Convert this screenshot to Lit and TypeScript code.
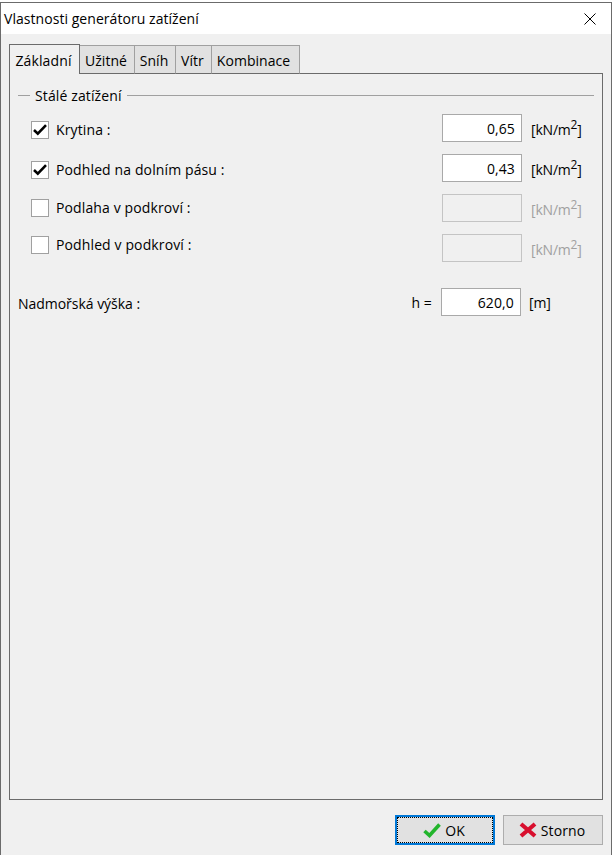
import { LitElement, html, css } from "lit";
import { customElement } from "lit/decorators.js";

const rows = [
  { label: "Krytina :", checked: true, value: "0,65", lead: "low" },
  { label: "Podhled na dolním pásu :", checked: true, value: "0,43", lead: "low" },
  { label: "Podlaha v podkroví :", checked: false, value: "", lead: "" },
  { label: "Podhled v podkroví :", checked: false, value: "", lead: "high" },
];

const tabs = ["Základní", "Užitné", "Sníh", "Vítr", "Kombinace"];

@customElement("app-root")
export class AppRoot extends LitElement {
  static styles = css`
    :host {
      display: block;
      width: 613px;
      height: 855px;
      background: #fff;
      font-family: "Open Sans", "Noto Sans", sans-serif;
      font-size: 14px;
      letter-spacing: 0.12px;
      color: #000;
      overflow: hidden;
    }
    .window {
      box-sizing: border-box;
      width: 612px;
      height: 853px;
      margin-top: 2px;
      border: 1px solid #6b6b6b;
      border-bottom: 0;
      display: flex;
      flex-direction: column;
      background: #f0f0f0;
    }
    .title {
      height: 31px;
      flex: none;
      background: #fff;
      display: flex;
      align-items: center;
      justify-content: space-between;
      padding: 0 15px 0 3px;
      letter-spacing: 0.05px;
    }
    .body {
      flex: 1;
      display: flex;
      flex-direction: column;
      padding: 10px 8px 0 8px;
      min-height: 0;
    }
    .tabs {
      display: flex;
      align-items: flex-end;
      height: 30px;
      flex: none;
      margin-bottom: -1px;
      position: relative;
      z-index: 1;
      letter-spacing: 0.05px;
    }
    .tab {
      box-sizing: border-box;
      height: 29px;
      padding: 2px 7px 0 5px;
      background: #e1e1e1;
      border: 1px solid #a0a0a0;
      border-left: 0;
      border-bottom-color: #6b6b6b;
      display: flex;
      align-items: center;
      justify-content: center;
      white-space: nowrap;
    }
    .tab.active {
      height: 30px;
      width: 71px;
      background: #f0f0f0;
      border: 1px solid #6b6b6b;
      border-bottom: 0;
      letter-spacing: 0.12px;
    }
    .tab.w1 { width: 55px; }
    .tab.w2 { width: 41px; }
    .tab.w3 { width: 36px; }
    .tab.w4 { width: 88px; padding: 2px 8px 0 4px; }
    .panel {
      box-sizing: border-box;
      height: 727px;
      flex: none;
      border: 1px solid #6b6b6b;
      padding: 11px 8px 0 8px;
    }
    .legend {
      display: flex;
      align-items: center;
      height: 20px;
      gap: 5px;
    }
    .legend::before {
      content: "";
      width: 12px;
      height: 1px;
      background: #a0a0a0;
    }
    .legend::after {
      content: "";
      flex: 1;
      height: 1px;
      background: #a0a0a0;
    }
    .rows {
      display: flex;
      flex-direction: column;
      gap: 12px;
      margin-top: 9px;
    }
    .row {
      display: flex;
      align-items: center;
      height: 28px;
      padding-left: 13px;
    }
    .lead {
      flex: 1;
      display: flex;
      align-items: center;
      min-width: 0;
    }
    .lead.low { margin-top: 4px; }
    .lead.high { margin-bottom: 6px; }
    .check {
      box-sizing: border-box;
      width: 18px;
      height: 18px;
      background: #fff;
      border: 1px solid #a0a0a0;
      display: flex;
      align-items: center;
      justify-content: center;
      margin-right: 7px;
      flex: none;
    }
    .label { white-space: nowrap; margin-bottom: 2px; }
    .input {
      box-sizing: border-box;
      width: 80px;
      height: 28px;
      background: #fff;
      border: 1px solid #a9a9a9;
      display: flex;
      align-items: center;
      justify-content: flex-end;
      padding-right: 6px;
      flex: none;
    }
    .input.off {
      background: #f0f0f0;
      border-color: #c4c4c4;
    }
    .unit {
      width: 72px;
      margin-top: 2px;
      padding-left: 9px;
      box-sizing: border-box;
      flex: none;
      white-space: nowrap;
      letter-spacing: -0.2px;
    }
    .unit.off { color: #a0a0a0; }
    .unit sup {
      font-size: 12px;
      line-height: 0;
      vertical-align: 6px;
    }
    .alt {
      display: flex;
      align-items: center;
      height: 28px;
      margin-top: 26px;
    }
    .alt .label { flex: 1; margin: 2px 0 0; letter-spacing: -0.03px; }
    .alt .h { margin-right: 9px; }
    .alt .unit { width: 73px; padding-left: 8px; margin-top: 0; }
    .footer {
      flex: 1;
      display: flex;
      justify-content: flex-end;
      align-items: flex-start;
      gap: 8px;
      padding-top: 15px;
    }
    .btn {
      box-sizing: border-box;
      width: 100px;
      height: 30px;
      background: #e1e1e1;
      border: 1px solid #adadad;
      display: flex;
      align-items: center;
      justify-content: center;
      gap: 4px;
      font: inherit;
      letter-spacing: inherit;
      color: #000;
      padding: 0 2px 0 0;
    }
    .btn.default {
      border: 2px solid #0078d7;
      outline: 1px dotted #000;
      outline-offset: -3px;
    }
  `;

  private checkMark() {
    return html`<svg width="16" height="14" viewBox="0 0 16 14">
      <path d="M2 7 L5.8 10.6 L14 2.2" fill="none" stroke="#000" stroke-width="2.6" />
    </svg>`;
  }

  render() {
    return html`
      <div class="window">
        <div class="title">
          <span>Vlastnosti generátoru zatížení</span>
          <svg width="12" height="12" viewBox="0 0 12 12">
            <path d="M.5 .5 L11.5 11.5 M11.5 .5 L.5 11.5" stroke="#000" stroke-width="1" fill="none" />
          </svg>
        </div>
        <div class="body">
          <div class="tabs">
            ${tabs.map((t, i) => html`<div class="tab ${i === 0 ? "active" : `w${i}`}">${t}</div>`)}
          </div>
          <div class="panel">
            <div class="legend"><span>Stálé zatížení</span></div>
            <div class="rows">
              ${rows.map(
                (r) => html`
                  <div class="row">
                    <div class="lead ${r.lead}">
                      <div class="check">${r.checked ? this.checkMark() : ""}</div>
                      <div class="label">${r.label}</div>
                    </div>
                    <div class="input ${r.checked ? "" : "off"}">${r.value}</div>
                    <div class="unit ${r.checked ? "" : "off"}">[kN/m<sup>2</sup>]</div>
                  </div>
                `
              )}
            </div>
            <div class="alt">
              <div class="label">Nadmořská výška :</div>
              <div class="h">h =</div>
              <div class="input">620,0</div>
              <div class="unit">[m]</div>
            </div>
          </div>
          <div class="footer">
            <button class="btn default">
              <svg width="18" height="16" viewBox="0 0 18 16">
                <path d="M1.5 9 L6.5 13.5 L16.5 2.5" fill="none" stroke="#22b52c" stroke-width="3.6" />
              </svg>
              OK
            </button>
            <button class="btn">
              <svg width="18" height="16" viewBox="0 0 18 16">
                <path d="M2 2 L16 14 M16 2 L2 14" fill="none" stroke="#d80f2e" stroke-width="4.2" />
              </svg>
              Storno
            </button>
          </div>
        </div>
      </div>
    `;
  }
}
